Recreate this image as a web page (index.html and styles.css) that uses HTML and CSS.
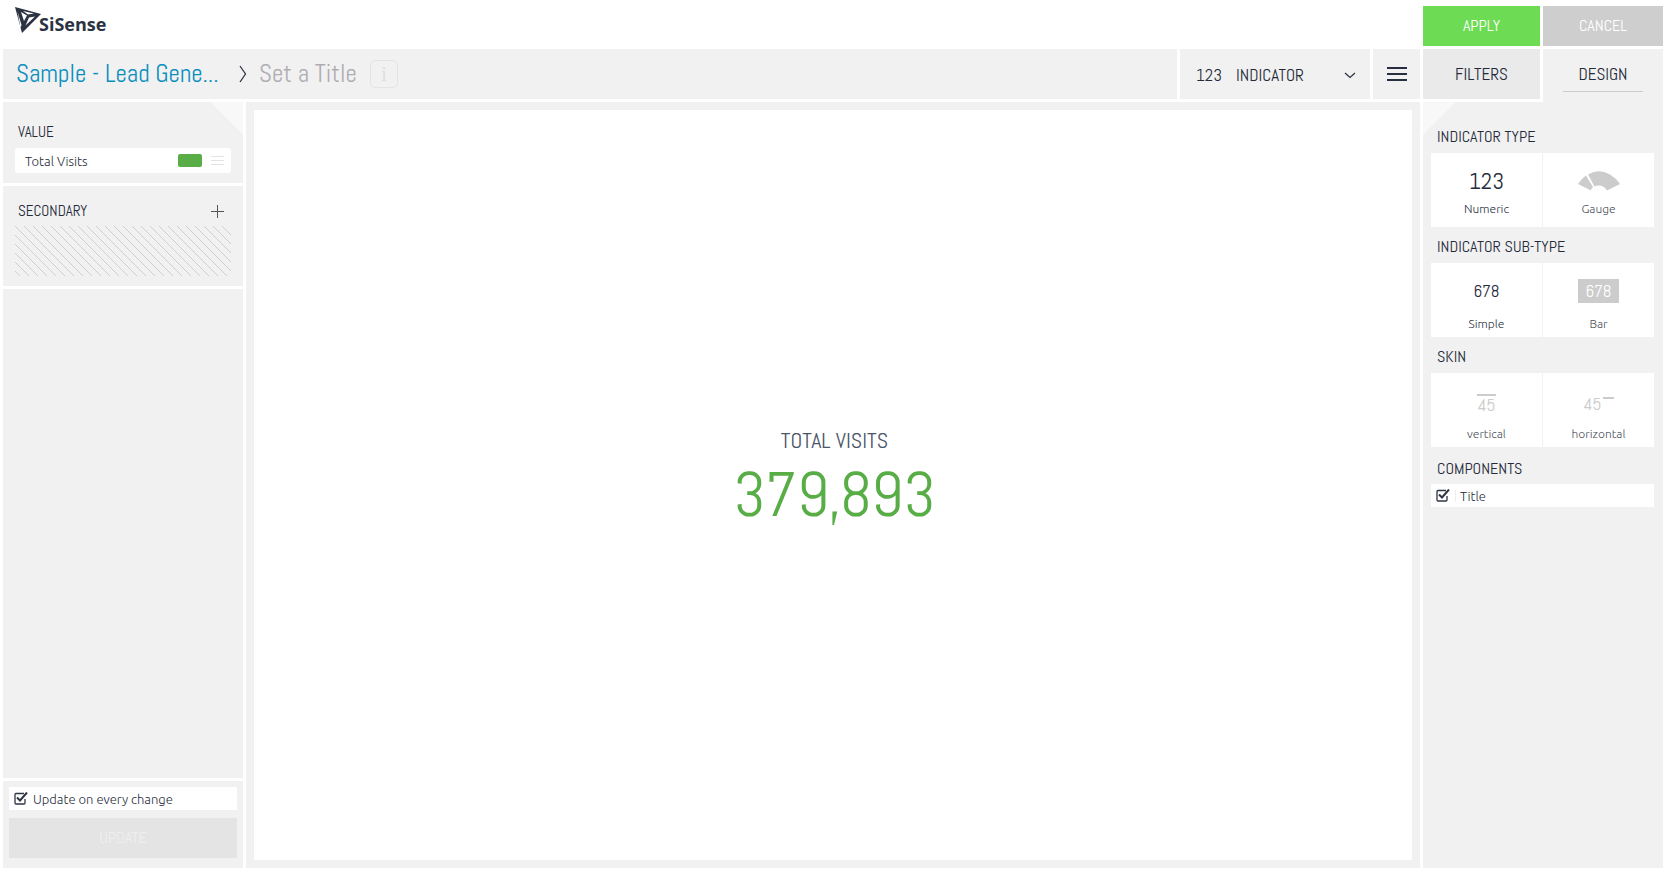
FILE: index.html
```html
<!DOCTYPE html>
<html lang="en">
<head>
<meta charset="utf-8">
<title>Widget designer</title>
<link rel="stylesheet" href="styles.css">
</head>
<body>
<div class="app">
  <header class="top">
    <a class="logo" href="#" aria-label="SiSense home">
      <svg class="logo-mark" width="26" height="27" viewBox="0 0 26 27" aria-hidden="true">
        <path d="M0 0L26 7L7 26z" fill="#2b3242"/>
        <path d="M8 4L19 6.500L13 7.500zM6 5L12 8.500L9 14zM2.500 4.500L6.500 18L5.500 21zM20 9.500L10.500 18.500L14 10.500z" fill="#fff"/>
      </svg>
      <span class="logo-text">SiSense</span>
    </a>
    <button class="action apply" type="button">APPLY</button>
    <button class="action cancel" type="button">CANCEL</button>
  </header>

  <div class="toolbar">
    <div class="titlebar">
      <a class="crumb" href="#">Sample - Lead Gene...</a>
      <svg class="crumb-arrow" width="8" height="18" viewBox="0 0 8 18" aria-hidden="true"><path d="M1 1L6.500 9L1 17" fill="none" stroke="#2e3444" stroke-width="1.300"/></svg>
      <input class="title-input" type="text" placeholder="Set a Title" aria-label="Widget title">
      <button class="info" type="button" aria-label="Information">i</button>
    </div>
    <div class="picker">
      <span class="picker-icon" aria-hidden="true">123</span>
      <select class="picker-select" aria-label="Widget type"><option>INDICATOR</option></select>
      <svg class="picker-arrow" width="12" height="7" viewBox="0 0 12 7" aria-hidden="true"><path d="M1 1L6 5.500L11 1" fill="none" stroke="#2e3444" stroke-width="1.300"/></svg>
    </div>
    <button class="menu" type="button" aria-label="Menu">
      <svg width="20" height="14" viewBox="0 0 20 14" aria-hidden="true"><path d="M0 1H20M0 7H20M0 13H20" stroke="#272e42" stroke-width="2"/></svg>
    </button>
    <button class="tab" type="button">FILTERS</button>
    <button class="tab tab-active" type="button"><span class="tab-line">DESIGN</span></button>
  </div>

  <div class="workspace">
    <aside class="data">
      <section class="panel fold-right">
        <h2 class="heading">VALUE</h2>
        <div class="field">
          <span class="field-name">Total Visits</span>
          <button class="swatch" type="button" aria-label="Colour"></button>
          <button class="bare" type="button" aria-label="Field menu">
            <svg width="13" height="9" viewBox="0 0 13 9" aria-hidden="true"><path d="M0 .5H13M0 4.500H13M0 8.500H13" stroke="#e2e2e2"/></svg>
          </button>
        </div>
      </section>
      <section class="panel">
        <div class="heading-row">
          <h2 class="heading">SECONDARY</h2>
          <button class="bare" type="button" aria-label="Add field">
            <svg width="13" height="13" viewBox="0 0 13 13" aria-hidden="true"><path d="M0 6.500H13M6.500 0V13" stroke="#555"/></svg>
          </button>
        </div>
        <svg class="hatch" aria-hidden="true">
          <defs><pattern id="lines" width="9" height="9" patternUnits="userSpaceOnUse"><path d="M-1 -1L10 10" stroke="#cfcfcf"/></pattern></defs>
          <rect width="100%" height="100%" fill="url(#lines)"/>
        </svg>
      </section>
      <section class="panel panel-empty"></section>
      <section class="panel panel-update">
        <label class="check-row"><input class="check" type="checkbox" checked>Update on every change</label>
        <button class="update" type="button" disabled>UPDATE</button>
      </section>
    </aside>

    <main class="canvas">
      <div class="preview">
        <div class="metric-title">TOTAL VISITS</div>
        <div class="metric-value">379,893</div>
      </div>
    </main>

    <aside class="design fold-left">
      <h2 class="heading">INDICATOR TYPE</h2>
      <div class="options">
        <label class="option option-on"><input class="radio" type="radio" name="type" checked><span class="glyph glyph-large">123</span>Numeric</label>
        <label class="option"><input class="radio" type="radio" name="type"><span class="glyph">
          <svg width="42" height="20" viewBox="0 0 42 20" aria-hidden="true"><path d="M0 13Q3 8 8 4.500L15 16Q13 17.500 13 19.500zM10 3.500Q21 -3 32 3.500Q38 7 42 13L29 19.500Q26 14.500 21 14.500Q18 14.500 16.500 15.500z" fill="#ccc"/></svg>
        </span>Gauge</label>
      </div>
      <h2 class="heading">INDICATOR SUB-TYPE</h2>
      <div class="options options-subtype">
        <label class="option option-on"><input class="radio" type="radio" name="subtype" checked><span class="glyph">678</span>Simple</label>
        <label class="option"><input class="radio" type="radio" name="subtype"><span class="glyph"><span class="bar">678</span></span>Bar</label>
      </div>
      <h2 class="heading">SKIN</h2>
      <div class="options options-skin">
        <label class="option"><input class="radio" type="radio" name="skin"><span class="glyph"><span class="skin-v">45</span></span>vertical</label>
        <label class="option"><input class="radio" type="radio" name="skin"><span class="glyph"><span class="skin-h">45</span></span>horizontal</label>
      </div>
      <h2 class="heading heading-tall">COMPONENTS</h2>
      <label class="check-row component"><input class="check" type="checkbox" checked><span class="component-name">Title</span></label>
    </aside>
  </div>
</div>
</body>
</html>
```
FILE: styles.css
```css
* { box-sizing: border-box; }
:root {
  --panel: #f1f1f1;
  --ink: #252a3a;
  --narrow: "Abel", "Roboto Condensed", "Roboto", sans-serif;
  --body: "Ubuntu", "Noto Sans", "Open Sans", sans-serif;
}
body { margin: 0; background: #fff; color: var(--ink); font: 300 13px/20px var(--body); }
button, input, select { font: inherit; color: inherit; }
button { border: 0; padding: 0; background: none; }
h2 { margin: 0; }
svg { display: block; }

.app { display: flex; flex-direction: column; min-height: 100vh; padding: 6px 7px 4px 3px; }

.top { display: grid; grid-template-columns: 1fr 117px 120px; gap: 3px; }
.logo { display: flex; align-items: flex-start; padding: 1px 12px; color: #2b3242; text-decoration: none; }
.logo-text { margin-left: -2px; padding-top: 7px; font: 700 18px/20px "Open Sans", sans-serif; }
.action { height: 40px; color: #fff; font: 400 16px/20px var(--narrow); }
.apply { background: #6edb55; }
.cancel { background: #cecece; }

.toolbar { display: grid; grid-template-columns: 1fr 190px 47px 117px 120px; gap: 3px; margin-top: 3px; min-height: 50px; }
.titlebar { display: flex; align-items: center; padding: 0 13px; background: var(--panel); font: 400 25px/30px var(--narrow); }
.crumb { width: 223px; padding-bottom: 1px; color: #0a8fbd; text-decoration: none; white-space: nowrap; }
.crumb-arrow { flex: none; margin-right: 12px; }
.title-input { width: 104px; padding: 0 0 1px; border: 0; background: none; outline: 0; }
.title-input::placeholder { color: #b0acb1; opacity: 1; }
.info { width: 28px; height: 28px; margin-left: 7px; border: 1px solid #e4e4e4; border-radius: 5px; color: #dedede; font: 20px/24px "Liberation Serif", serif; }
.picker { display: grid; grid-template-columns: 40px 1fr; align-items: center; padding: 2px 14px 0 16px; background: var(--panel); font: 400 17px/20px var(--narrow); }
.picker-select { grid-area: 1 / 2; width: 100%; padding: 0; border: 0; background: none; appearance: none; }
.picker-arrow { grid-area: 1 / 2; justify-self: end; pointer-events: none; }
.menu { display: grid; place-items: center; background: var(--panel); }
.tab { background: #eaeaea; font: 400 17px/20px var(--narrow); }
.tab-active { display: flex; justify-content: center; margin-bottom: -3px; padding-top: 10px; background: var(--panel); }
.tab-line { width: 80px; height: 33px; padding-top: 5px; border-bottom: 1px solid #ccc; }

.workspace { display: grid; grid-template-columns: 240px 1fr 240px; gap: 3px; flex: 1; margin-top: 3px; }
.heading { font: 400 15px/20px var(--narrow); }

.data { display: flex; flex-direction: column; gap: 3px; }
.panel { padding: 20px 12px 10px; background: var(--panel); }
.fold-right { background: linear-gradient(225deg, #f8f8f8 23px, var(--panel) 23px); }
.panel .heading { padding-left: 3px; }
.field { display: flex; align-items: center; gap: 9px; height: 25px; margin-top: 6px; padding: 0 7px 0 10px; border-radius: 3px; background: #fff; }
.field-name { flex: 1; }
.swatch { width: 24px; height: 13px; border-radius: 2px; background: #58ad46; }
.heading-row { display: flex; align-items: center; justify-content: space-between; padding-right: 7px; margin-top: -5px; }
.hatch { width: 100%; height: 50px; margin-top: 5px; }
.panel-empty { flex: 1; }
.panel-update { padding: 6px 6px 10px; }
.check-row { display: flex; align-items: center; gap: 5px; height: 23px; padding: 0 5px; background: #fff; }
.check {
  flex: none; width: 14px; height: 13px; margin: 0; appearance: none;
}
.check:checked {
  background: url("data:image/svg+xml,%3Csvg xmlns='http://www.w3.org/2000/svg' viewBox='0 0 14 13'%3E%3Cpath d='M10 1.500H2Q1 1.500 1 2.500V11Q1 12 2 12H10Q11 12 11 11V7' fill='none' stroke='%232e3444' stroke-width='1.300'/%3E%3Cpath d='M3 5.500L6 8.500L13 .5' fill='none' stroke='%232e3444' stroke-width='2'/%3E%3C/svg%3E") no-repeat;
}
.update { width: 100%; height: 40px; margin-top: 8px; background: #e4e4e4; color: #efefef; font: 400 16px/20px var(--narrow); }

.canvas { display: flex; padding: 8px; background: var(--panel); }
.preview { display: flex; flex: 1; flex-direction: column; align-items: center; justify-content: center; padding: 0 0 14px 3px; background: #fff; }
.metric-title { color: #4a5568; font: 400 22px/34px var(--narrow); }
.metric-value { color: #58ad46; font: 400 63px/76px var(--narrow); }

.design { padding: 25px 9px 9px 8px; background: linear-gradient(135deg, #f8f8f8 23px, var(--panel) 23px); }
.design .heading { padding-left: 6px; font-size: 16px; }
.design .heading-tall { line-height: 24px; }
.options { display: grid; grid-template-columns: 1fr 1fr; gap: 1px; margin: 6px 0 10px; }
.option { display: flex; flex-direction: column; align-items: center; height: 74px; padding-top: 8px; background: #fff; color: #484b56; font-size: 12px; line-height: 16px; position: relative; }
.option-on { color: var(--ink); }
.radio { position: absolute; opacity: 0; }
.glyph { display: grid; place-items: center; height: 40px; color: #ccc; font: 400 17px/20px var(--narrow); }
.option-on .glyph { color: var(--ink); }
.glyph-large { font-size: 23px; }
.options-subtype .glyph { height: 45px; padding-bottom: 6px; }
.options-skin .glyph { height: 45px; font-size: 18px; }
.bar { padding: 2px 7px; background: #ccc; color: #fff; }
.skin-v { border-top: 2px solid #ccc; line-height: 18px; }
.skin-h { display: flex; gap: 1px; }
.skin-h::after { content: ""; width: 11px; height: 2px; margin-top: 3px; background: #ccc; }
.component { gap: 5px; margin-top: 3px; }
.component-name { padding-left: 4px; border-left: 1px solid #eee; line-height: 12px; }
```
